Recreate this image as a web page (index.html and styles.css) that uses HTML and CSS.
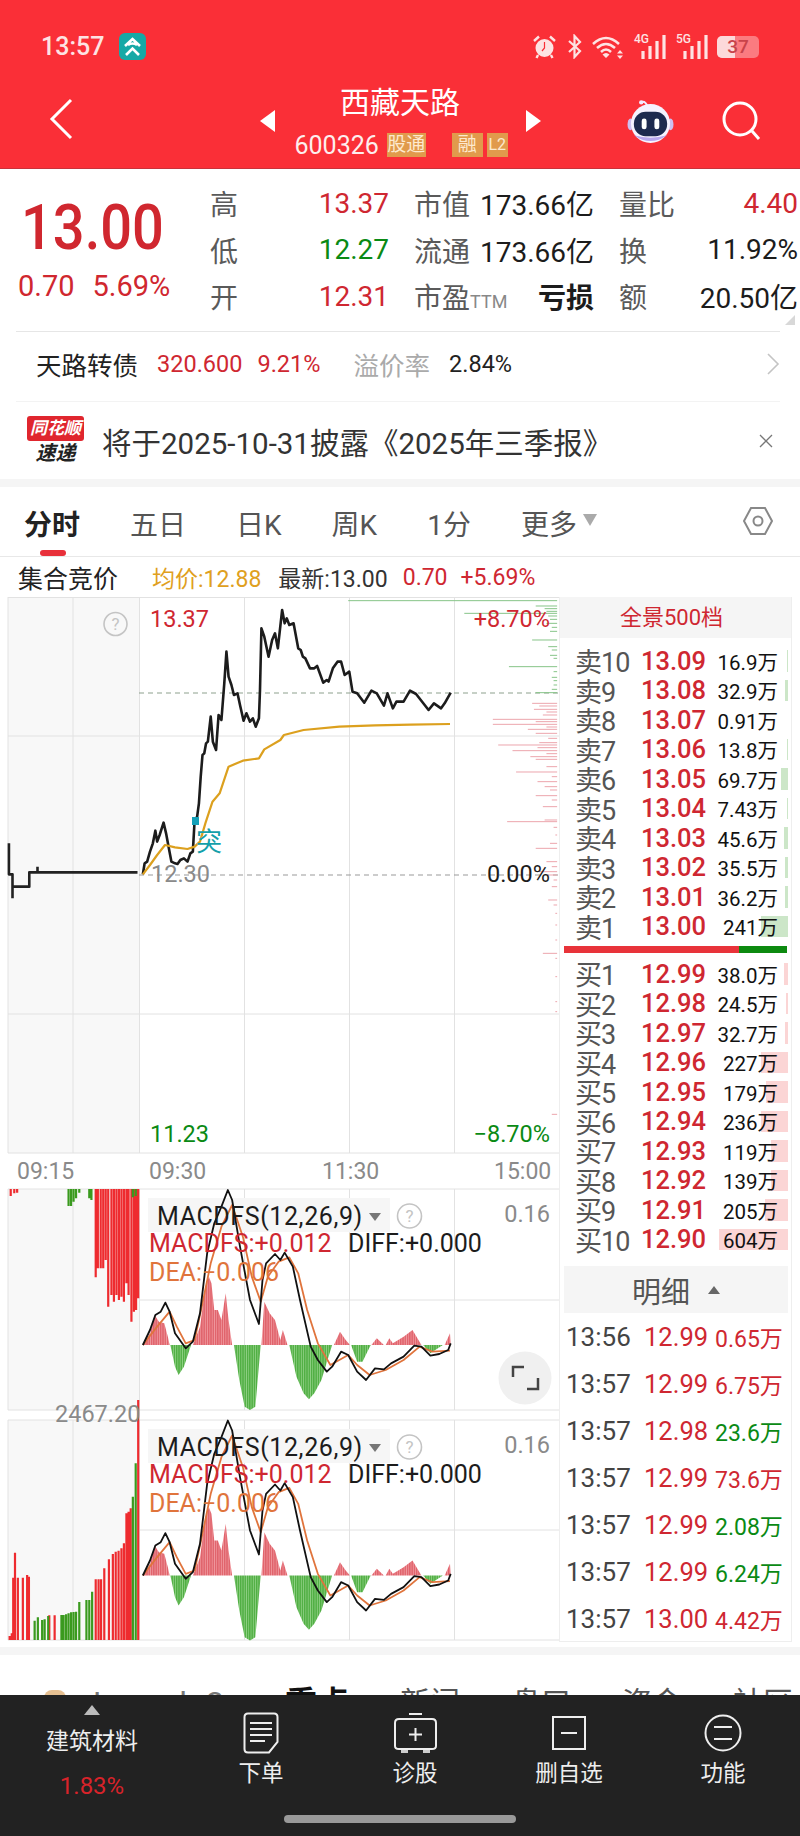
FILE: index.html
```html
<!DOCTYPE html>
<html lang="zh-CN">
<head>
    <meta charset="UTF-8">
    <meta name="viewport" content="width=device-width, initial-scale=1.0">
    <title>西藏天路 600326</title>
    <link rel="stylesheet" href="styles.css">
</head>
<body>
<div class="page">
    <header class="top">
        <div class="status">
            <span class="clock">13:57</span>
            <svg class="app-icon" viewBox="0 0 27 27"><rect width="27" height="27" rx="6" fill="#16a9a6"/><path d="M6 13 L13.5 6 L21 13 M9 12 Q13.5 9 18 12 M7 22 L13.5 15.5 L20 22" fill="none" stroke="#fff" stroke-width="2.6"/></svg>
            <div class="status-right">
                <svg class="alarm" viewBox="0 0 25 25"><circle cx="12.5" cy="14" r="9" fill="#fde3e3"/><path d="M12.5 8 V14 L10 17" fill="none" stroke="#fa2f37" stroke-width="1.2"/><path d="M2 7 L7 2.5 M23 7 L18 2.5 M6 21 L4.5 24 M19 21 L20.500 24" stroke="#fde3e3" stroke-width="2.400" fill="none"/></svg>
                <svg class="bt" viewBox="0 0 15 25"><path d="M2 7 L13 17 L7.500 23 V2 L13 8 L2 18" fill="none" stroke="#fde3e3" stroke-width="2.200"/></svg>
                <svg class="wifi" viewBox="0 0 32 24"><path d="M1 9 Q14 -3 27 9 M5 13 Q14 5 23 13 M9 17 Q14 12 19 17" fill="none" stroke="#fde3e3" stroke-width="2.500"/><path d="M14 23 L10.500 19.500 Q14 16.500 17.500 19.500 Z M28 15 L31 18.500 H25 Z M28 24 L31 20.500 H25 Z" fill="#fde3e3"/></svg>
                <div class="signal"><span class="net">4G</span><svg viewBox="0 0 26 25"><path d="M3 25 V17 M10 25 V12 M17 25 V7 M24 25 V1" stroke="#fde3e3" stroke-width="3.200"/></svg></div>
                <div class="signal"><span class="net">5G</span><svg viewBox="0 0 26 25"><path d="M3 25 V17 M10 25 V12 M17 25 V7 M24 25 V1" stroke="#fde3e3" stroke-width="3.200"/></svg></div>
                <div class="battery"><span class="battery-fill"></span><span class="battery-num">37</span></div>
            </div>
        </div>
        <nav class="stock-nav">
            <svg class="back" viewBox="0 0 24 42"><path d="M22 2 L3 21 L22 40" fill="none" stroke="#fff" stroke-width="3"/></svg>
            <div class="stock-center">
                <span class="tri-left"></span>
                <div class="stock-id">
                    <div class="stock-name">西藏天路</div>
                    <div class="stock-code">
                        <span class="code-num">600326</span>
                        <span class="tag tag-hk">股通</span>
                        <span class="tag tag-rong">融</span>
                        <span class="tag tag-l2">L2</span>
                    </div>
                </div>
                <span class="tri-right"></span>
            </div>
            <div class="nav-right">
                <svg class="robot" viewBox="0 0 48 44"><path d="M21 7 Q19 1 15 2" fill="none" stroke="#f3e9ff" stroke-width="2"/><circle cx="14.500" cy="2.500" r="2.200" fill="#f3e9ff"/><ellipse cx="3.500" cy="25" rx="3" ry="6" fill="#cdbff0"/><ellipse cx="44.500" cy="25" rx="3" ry="6" fill="#cdbff0"/><circle cx="24" cy="24" r="20" fill="#f6f2ff"/><path d="M7 36 Q24 48 41 36 Q24 41 7 36" fill="#b9a8ee"/><rect x="7" y="12" width="34" height="25" rx="12" fill="#1e2a4f"/><rect x="15" y="19" width="5" height="11" rx="2.500" fill="#fff"/><rect x="28" y="19" width="5" height="11" rx="2.500" fill="#fff"/></svg>
                <svg class="search" viewBox="0 0 40 40"><circle cx="18" cy="18" r="16" fill="none" stroke="#fff" stroke-width="3"/><path d="M30 30 L37 38" stroke="#fff" stroke-width="3"/></svg>
            </div>
        </nav>
    </header>

    <section class="quote">
        <div class="price-block">
            <div class="last">13.00</div>
            <div class="change"><span>0.70</span><span>5.69%</span></div>
        </div>
        <div class="stats">
            <span class="lbl">高</span><span class="val red">13.37</span>
            <span class="lbl lbl-mid">市值</span><span class="val dark">173.66亿</span>
            <span class="lbl lbl-mid">量比</span><span class="val red">4.40</span>

            <span class="lbl">低</span><span class="val green">12.27</span>
            <span class="lbl lbl-mid">流通</span><span class="val dark">173.66亿</span>
            <span class="lbl lbl-mid">换</span><span class="val dark">11.92%</span>

            <span class="lbl">开</span><span class="val red">12.31</span>
            <span class="lbl lbl-mid">市盈<small>TTM</small></span><span class="val dark loss">亏损</span>
            <span class="lbl lbl-mid">额</span><span class="val dark">20.50亿</span>
        </div>
        <span class="corner"></span>
    </section>

    <section class="bond">
        <span class="bond-name">天路转债</span>
        <span class="bond-price">320.600</span>
        <span class="bond-pct">9.21%</span>
        <span class="bond-lbl">溢价率</span>
        <span class="bond-prem">2.84%</span>
        <svg class="bond-arrow" viewBox="0 0 14 22"><path d="M2 1 L12 11 L2 21" fill="none" stroke="#c4c4c4" stroke-width="1.600"/></svg>
    </section>

    <section class="notice">
        <div class="ths-logo">
            <span class="ths-top">同花顺</span>
            <span class="ths-bottom">速递</span>
        </div>
        <span class="notice-text">将于2025-10-31披露《2025年三季报》</span>
        <svg class="notice-close" viewBox="0 0 14 14"><path d="M1 1 L13 13 M13 1 L1 13" stroke="#777" stroke-width="1.300"/></svg>
    </section>

    <div class="band"></div>

    <div class="tabs">
        <span class="tab tab-on">分时</span>
        <span class="tab">五日</span>
        <span class="tab">日K</span>
        <span class="tab">周K</span>
        <span class="tab">1分</span>
        <span class="tab tab-more">更多<i class="more-tri"></i></span>
        <svg class="hex" viewBox="0 0 30 30"><path d="M8 2 H22 L29 15 L22 28 H8 L1 15 Z" fill="none" stroke="#888" stroke-width="2"/><circle cx="15" cy="15" r="4.500" fill="none" stroke="#888" stroke-width="2"/></svg>
    </div>

    <div class="infoline">
        <span class="auction">集合竞价</span>
        <span class="avg">均价:12.88</span>
        <span class="latest">最新:13.00</span>
        <span class="chg">0.70</span>
        <span class="chgp">+5.69%</span>
    </div>

    <main class="board">
        <svg class="chart" width="559" height="1044" viewBox="0 597 559 1044">
            <!-- 盘前灰底 -->
            <rect class="pre" x="8" y="597" width="131" height="556"/>
            <rect class="pre" x="8" y="1189" width="131" height="221"/>
            <rect class="pre" x="8" y="1420" width="131" height="220"/>

            <!-- 网格 -->
            <path class="grid" d="M8 597.500 H559 M8 736 H559 M8 1014 H559 M8 1153 H559 M8 597 V1153 M73 597 V1153 M139.500 597 V1153 M244.500 597 V1153 M349.500 597 V1153 M454.500 597 V1153"/>
            <path class="grid" d="M8 1189 H559 M139 1300 H559 M8 1410 H559 M8 1189 V1410 M73 1189 V1410 M139.500 1189 V1410 M244.500 1189 V1410 M349.500 1189 V1410 M454.500 1189 V1410"/>
            <path class="grid" d="M8 1420 H559 M139 1530 H559 M8 1640 H559 M8 1420 V1640 M73 1420 V1640 M139.500 1420 V1640 M244.500 1420 V1640 M349.500 1420 V1640 M454.500 1420 V1640"/>

            <path class="dash-green" d="M139 693 H558"/>
            <path class="dash-gray" d="M139 875 H558"/>

            <!-- 下面的点都按 590 起、x*2.8 y*3 量的 -->
            <g transform="translate(0 590) scale(.35714 .33333)">
                <path class="depth-buy" d="M975 32H1560M1500 48H1560M1525 56H1560M1530 64H1560M1300 70H1560M1535 78H1560M1540 88H1560M1530 100H1560M1545 112H1560M1540 124H1560M1490 150H1560M1535 170H1560M1545 180H1560M1540 196H1560M1550 205H1560M1425 230H1560M1550 245H1560M1545 262H1560M1550 272H1560M1550 285H1560M1545 298H1560M1500 308H1560"/>
                <path class="depth-sell" d="M1490 340H1560M1510 348H1560M1495 358H1560M1530 366H1560M1520 375H1560M1380 388H1560M1500 395H1560M1380 403H1560M1530 411H1560M1478 418H1560M1500 430H1560M1535 445H1560M1510 458H1560M1395 465H1560M1505 473H1560M1435 482H1560M1530 491H1560M1485 500H1560M1500 508H1560M1530 530H1560M1445 546H1560M1545 560H1560M1505 575H1560M1525 590H1560M1540 600H1560M1500 617H1560M1545 630H1560M1520 650H1560M1420 695H1560M1525 690H1560M1550 712H1560M1555 735H1560M1540 760H1560M1500 775H1560M1530 815H1560M1545 830H1560M1510 845H1560M1535 855H1560M1550 870H1560M1545 890H1560M1535 930H1560M1550 945H1560M1555 970H1560M1555 1005H1560M1520 1090H1560M1555 1050H1560M1555 1105H1560M1555 1160H1560M1555 1235H1560M1555 1265H1560M1545 1573H1560"/>
                <path class="line-pre" d="M25 760V853H35V925M35 890H82V847H105V830M105 847H385"/>
                <polyline class="line-price" points="400,853 405,820 412,815 420,785 428,760 435,722 440,755 447,735 458,698 465,730 472,770 480,815 490,820 497,822 505,810 515,805 525,815 533,790 540,785 545,690 552,680 557,640 562,560 567,495 572,490 577,460 582,455 590,380 596,455 605,480 612,375 620,390 628,280 634,185 640,260 648,285 655,315 665,310 672,345 682,392 690,370 700,395 708,385 716,410 725,385 728,300 732,115 740,140 752,200 762,150 770,130 778,175 790,60 797,100 803,85 810,105 822,100 835,175 842,180 848,200 855,205 868,235 880,235 888,228 905,278 915,270 920,275 932,235 945,215 955,215 965,255 978,245 987,305 1000,310 1020,338 1040,302 1055,310 1075,347 1085,310 1100,355 1110,335 1130,335 1148,302 1165,312 1200,360 1215,340 1235,355 1245,340 1262,308"/>
                <polyline class="line-avg" points="400,853 420,825 440,795 462,765 490,772 525,777 545,770 560,755 575,700 595,635 615,610 640,530 680,512 725,505 740,478 785,450 795,435 850,420 950,410 1050,406 1150,404 1260,402"/>
            </g>
            <rect class="signal-dot" x="192" y="817" width="7" height="8"/>
            <text class="tx-signal" x="196" y="851">突</text>

            <circle class="help" cx="115.500" cy="624" r="11.500"/>
            <text class="tx-help" x="115.500" y="630">?</text>

            <text class="tx-axis red" x="150" y="627">13.37</text>
            <text class="tx-axis red" x="550" y="627" text-anchor="end">+8.70%</text>
            <text class="tx-axis mute" x="151" y="882">12.30</text>
            <text class="tx-axis dark" x="550" y="882" text-anchor="end">0.00%</text>
            <text class="tx-axis green" x="150" y="1142">11.23</text>
            <text class="tx-axis green" x="550" y="1142" text-anchor="end">−8.70%</text>

            <text class="tx-time" x="17" y="1179">09:15</text>
            <text class="tx-time" x="149" y="1179">09:30</text>
            <text class="tx-time" x="322" y="1179">11:30</text>
            <text class="tx-time" x="494" y="1179">15:00</text>

            <!-- 成交量 -->
            <g transform="translate(0 1180) scale(.35714 .33333)">
                <path class="vol-red" d="M30 27V48M40 27V40M48 27V38M268 27V292M274 27V265M282 27V265M289 27V265M296 27V240M303 27V380M312 27V345M319 27V365M326 27V345M333 27V360M340 27V350M347 27V365M354 27V310M360 27V345M368 27V425M375 27V395M381 27V390M387 27V355"/>
                <path class="vol-green" d="M192 27V78M199 27V78M206 27V65M213 27V55M222 27V38M250 27V55M256 27V60M372 27V52M380 27V48"/>
            </g>
            <g transform="translate(0 1400) scale(.35714 .33333)">
                <path class="vol-red" d="M27 720V708M33 720V700M37 720V533M42 720V458M50 720V533M64 720V533M76 720V525M81 720V530M138 720V646M153 720V646M268 720V538M276 720V538M283 720V538M292 720V505M305 720V478M316 720V462M324 720V455M332 720V452M340 720V445M347 720V430M354 720V340M360 720V335M366 720V325M387 720V0"/>
                <path class="vol-green" d="M97 720V662M106 720V652M118 720V660M125 720V658M135 720V648M172 720V645M178 720V645M185 720V643M192 720V640M199 720V637M206 720V636M213 720V635M222 720V606M242 720V600M250 720V600M258 720V575M372 720V290M380 720V190"/>
            </g>
            <text class="tx-vol" x="55" y="1422">2467.20</text>

            <!-- MACD -->
            <defs>
                <pattern id="stripe-red" width="6.400" height="12" patternUnits="userSpaceOnUse"><rect width="6.400" height="12" fill="#f0989e"/><rect width="4" height="12" fill="#e0626b"/></pattern>
                <pattern id="stripe-green" width="6.400" height="12" patternUnits="userSpaceOnUse"><rect width="6.400" height="12" fill="#8fd084"/><rect width="4" height="12" fill="#4fae42"/></pattern>
            </defs>
            <rect class="macd-head" x="148" y="1198" width="242" height="34"/>
            <rect class="macd-head" x="148" y="1429" width="242" height="34"/>
            <g id="macd">
                <g transform="translate(0 1180) scale(.35714 .33333)">
                    <path class="hist-red" d="M400 495L420 460 433 405 445 425 460 430 470 470 475 495ZM540 495L560 440 575 320 585 290 592 310 600 390 610 390 620 420 632 340 640 420 650 495ZM732 495L740 365 755 400 770 420 785 480 792 450 805 495ZM935 495L952 455 968 480 980 495ZM1040 495L1055 475 1075 495ZM1080 495L1090 475 1100 490 1130 470 1155 450 1180 495ZM1245 495L1260 460 1262 495Z"/>
                    <path class="hist-green" d="M477 495L490 560 500 585 515 560 535 495ZM655 495L670 600 685 680 700 690 715 680 730 495ZM810 495L830 590 850 640 865 658 880 640 900 600 930 495ZM983 495L1000 545 1015 545 1038 495ZM1185 495L1205 520 1240 495Z"/>
                    <polyline class="line-dea" points="400,495 440,440 475,395 495,440 520,490 545,480 565,380 590,250 620,140 650,75 680,170 705,290 730,365 750,290 780,245 810,232 835,280 860,390 890,490 925,555 975,525 1000,555 1035,585 1080,570 1130,540 1175,500 1210,515 1260,512"/>
                    <polyline class="line-diff" points="400,495 420,450 435,405 450,395 463,368 475,395 490,460 520,505 540,485 560,400 580,220 600,130 620,80 638,30 650,60 672,200 700,360 725,432 735,300 745,250 770,222 785,240 797,218 820,260 840,360 870,500 890,540 915,575 930,560 955,515 975,525 1000,575 1025,600 1050,565 1075,568 1095,550 1130,530 1160,497 1180,500 1205,527 1230,522 1255,510 1262,490"/>
                </g>
            </g>
            <use href="#macd" y="230.500"/>

            <text class="tx-macd tx-title dark" x="157" y="1225">MACDFS(12,26,9)</text>
            <path class="tri-gray" d="M369 1213 H381 L375 1221 Z"/>
            <circle class="help" cx="409.500" cy="1216" r="12"/>
            <text class="tx-help" x="409.500" y="1222">?</text>
            <text class="tx-axis mute" x="550" y="1222" text-anchor="end">0.16</text>
            <text class="tx-macd red" x="149" y="1252">MACDFS:+0.012</text>
            <text class="tx-macd dark" x="348" y="1252">DIFF:+0.000</text>
            <text class="tx-macd orange" x="149" y="1281">DEA:−0.006</text>

            <text class="tx-macd tx-title dark" x="157" y="1456">MACDFS(12,26,9)</text>
            <path class="tri-gray" d="M369 1444 H381 L375 1452 Z"/>
            <circle class="help" cx="409.500" cy="1447" r="12"/>
            <text class="tx-help" x="409.500" y="1453">?</text>
            <text class="tx-axis mute" x="550" y="1453" text-anchor="end">0.16</text>
            <text class="tx-macd red" x="149" y="1483">MACDFS:+0.012</text>
            <text class="tx-macd dark" x="348" y="1483">DIFF:+0.000</text>
            <text class="tx-macd orange" x="149" y="1512">DEA:−0.006</text>

            <circle class="expand-bg" cx="525" cy="1378" r="26.500"/>
            <path class="expand-ico" d="M513 1377 V1367 H524 M538 1378 V1389 H527"/>
        </svg>

        <aside class="book">
            <div class="book-head">全景500档</div>
            <div class="levels levels-sell">
                <div class="level"><span class="bar bar-sell" style="width:1px"></span><span class="lv">卖10</span><span class="lp">13.09</span><span class="lq">16.9万</span></div>
                <div class="level"><span class="bar bar-sell" style="width:3px"></span><span class="lv">卖9</span><span class="lp">13.08</span><span class="lq">32.9万</span></div>
                <div class="level"><span class="lv">卖8</span><span class="lp">13.07</span><span class="lq">0.91万</span></div>
                <div class="level"><span class="bar bar-sell" style="width:1px"></span><span class="lv">卖7</span><span class="lp">13.06</span><span class="lq">13.8万</span></div>
                <div class="level"><span class="bar bar-sell" style="width:7px"></span><span class="lv">卖6</span><span class="lp">13.05</span><span class="lq">69.7万</span></div>
                <div class="level"><span class="bar bar-sell" style="width:1px"></span><span class="lv">卖5</span><span class="lp">13.04</span><span class="lq">7.43万</span></div>
                <div class="level"><span class="bar bar-sell" style="width:4px"></span><span class="lv">卖4</span><span class="lp">13.03</span><span class="lq">45.6万</span></div>
                <div class="level"><span class="bar bar-sell" style="width:3px"></span><span class="lv">卖3</span><span class="lp">13.02</span><span class="lq">35.5万</span></div>
                <div class="level"><span class="bar bar-sell" style="width:3px"></span><span class="lv">卖2</span><span class="lp">13.01</span><span class="lq">36.2万</span></div>
                <div class="level"><span class="bar bar-sell" style="width:27px"></span><span class="lv">卖1</span><span class="lp">13.00</span><span class="lq">241万</span></div>
            </div>
            <div class="split"><span class="split-red"></span><span class="split-green"></span></div>
            <div class="levels levels-buy">
                <div class="level"><span class="bar bar-buy" style="width:4px"></span><span class="lv">买1</span><span class="lp">12.99</span><span class="lq">38.0万</span></div>
                <div class="level"><span class="bar bar-buy" style="width:2px"></span><span class="lv">买2</span><span class="lp">12.98</span><span class="lq">24.5万</span></div>
                <div class="level"><span class="bar bar-buy" style="width:3px"></span><span class="lv">买3</span><span class="lp">12.97</span><span class="lq">32.7万</span></div>
                <div class="level"><span class="bar bar-buy" style="width:27px"></span><span class="lv">买4</span><span class="lp">12.96</span><span class="lq">227万</span></div>
                <div class="level"><span class="bar bar-buy" style="width:22px"></span><span class="lv">买5</span><span class="lp">12.95</span><span class="lq">179万</span></div>
                <div class="level"><span class="bar bar-buy" style="width:27px"></span><span class="lv">买6</span><span class="lp">12.94</span><span class="lq">236万</span></div>
                <div class="level"><span class="bar bar-buy" style="width:17px"></span><span class="lv">买7</span><span class="lp">12.93</span><span class="lq">119万</span></div>
                <div class="level"><span class="bar bar-buy" style="width:17px"></span><span class="lv">买8</span><span class="lp">12.92</span><span class="lq">139万</span></div>
                <div class="level"><span class="bar bar-buy" style="width:23px"></span><span class="lv">买9</span><span class="lp">12.91</span><span class="lq">205万</span></div>
                <div class="level"><span class="bar bar-buy" style="width:69px"></span><span class="lv">买10</span><span class="lp">12.90</span><span class="lq">604万</span></div>
            </div>
            <div class="ticks-head">明细<i class="up-tri"></i></div>
            <div class="ticks">
                <div class="tick"><span class="tt">13:56</span><span class="tp">12.99</span><span class="tq red">0.65万</span></div>
                <div class="tick"><span class="tt">13:57</span><span class="tp">12.99</span><span class="tq red">6.75万</span></div>
                <div class="tick"><span class="tt">13:57</span><span class="tp">12.98</span><span class="tq green">23.6万</span></div>
                <div class="tick"><span class="tt">13:57</span><span class="tp">12.99</span><span class="tq red">73.6万</span></div>
                <div class="tick"><span class="tt">13:57</span><span class="tp">12.99</span><span class="tq green">2.08万</span></div>
                <div class="tick"><span class="tt">13:57</span><span class="tp">12.99</span><span class="tq green">6.24万</span></div>
                <div class="tick"><span class="tt">13:57</span><span class="tp">13.00</span><span class="tq red">4.42万</span></div>
            </div>
        </aside>
    </main>

    <div class="band band-low"></div>

    <div class="news-tabs">
        <span class="lv2-ico"></span>
        <span class="news-lv2">Level-2</span>
        <span class="news-on">重点</span>
        <span>新闻</span>
        <span>盘口</span>
        <span>资金</span>
        <span>社区</span>
    </div>

    <footer class="dock">
        <div class="dock-item dock-sector">
            <i class="sector-tri"></i>
            <span class="sector-name">建筑材料</span>
            <span class="sector-pct">1.83%</span>
        </div>
        <div class="dock-item">
            <svg class="dock-ico" width="36" height="42" viewBox="0 0 36 42"><path d="M5 1.500 H31 Q34.500 1.500 34.500 5 V30 L26 40.500 H5 Q1.500 40.500 1.500 37 V5 Q1.500 1.500 5 1.500 Z" fill="none" stroke="#eee" stroke-width="2"/><path d="M7 11 H29 M7 17 H29 M7 23 H29 M7 29 H22" stroke="#eee" stroke-width="1.800"/></svg>
            <span>下单</span>
        </div>
        <div class="dock-item">
            <svg class="dock-ico" width="43" height="42" viewBox="0 0 43 42"><path d="M15 2 H28 M5 7 H38 Q42 7 42 11 V34 Q42 37 38 37 H5 Q1 37 1 34 V11 Q1 7 5 7 Z" fill="none" stroke="#eee" stroke-width="2"/><path d="M21.500 16 V29 M15 22.500 H28" stroke="#eee" stroke-width="2"/><path d="M7 38 H14 V41 H7 Z M29 38 H36 V41 H29 Z" fill="#ccc"/></svg>
            <span>诊股</span>
        </div>
        <div class="dock-item">
            <svg class="dock-ico" width="34" height="42" viewBox="0 0 34 42"><rect x="1" y="5" width="32" height="32" fill="none" stroke="#eee" stroke-width="2"/><path d="M9 21 H25" stroke="#eee" stroke-width="2"/></svg>
            <span>删自选</span>
        </div>
        <div class="dock-item">
            <svg class="dock-ico" width="38" height="42" viewBox="0 0 38 42"><circle cx="19" cy="21" r="17.500" fill="none" stroke="#eee" stroke-width="2"/><path d="M10 15 H28 M10 27 H28" stroke="#eee" stroke-width="2"/></svg>
            <span>功能</span>
        </div>
        <span class="home-pill"></span>
    </footer>
</div>
</body>
</html>
```

FILE: styles.css
```css
* {
    box-sizing: border-box;
}
body {
    margin: 0;
    background: #fff;
    font-family: Roboto, "Noto Sans CJK SC", sans-serif;
    color: #222;
}
.page {
    position: relative;
    width: 800px;
    height: 1836px;
    overflow: hidden;
}
.red { color: #cf2731; fill: #cf2731; }
.green { color: #0a8a14; fill: #0a8a14; }
.dark { color: #1c1c1c; fill: #1c1c1c; }
.mute { fill: #8a8a8a; }
.orange { fill: #e0743c; }

/* 顶部红色区 */
.top {
    height: 169px;
    background: #fa2f37;
    border-bottom: 1px solid #c9323a;
    color: #fff;
}
.status {
    height: 70px;
    padding: 23px 41px 0 41px;
    display: flex;
    align-items: center;
}
.clock {
    font-size: 25px;
    font-weight: 500;
    color: #fde3e3;
}
.app-icon {
    width: 27px;
    height: 27px;
    margin-left: 15px;
}
.status-right {
    margin-left: auto;
    display: flex;
    align-items: center;
}
.alarm { width: 25px; height: 25px; }
.bt { width: 15px; height: 25px; margin-left: 10px; }
.wifi { width: 32px; height: 24px; margin-left: 10px; }
.signal {
    position: relative;
    width: 32px;
    height: 25px;
    margin-left: 10px;
}
.signal svg {
    position: absolute;
    right: 0;
    top: 0;
    width: 26px;
    height: 25px;
}
.net {
    position: absolute;
    left: 0;
    top: -2px;
    font-size: 12px;
    font-weight: 500;
    color: #fde3e3;
}
.battery {
    position: relative;
    width: 42px;
    height: 22px;
    margin-left: 9px;
    background: #fb7b80;
    border-radius: 5px;
    overflow: hidden;
    text-align: center;
}
.battery-fill {
    position: absolute;
    left: 0;
    top: 0;
    bottom: 0;
    width: 18px;
    background: #fcd9da;
}
.battery-num {
    position: relative;
    font-size: 19px;
    line-height: 22px;
    font-weight: 500;
    color: #c9434a;
}
.stock-nav {
    height: 98px;
    display: grid;
    grid-template-columns: 1fr auto 1fr;
    align-items: center;
}
.back {
    width: 24px;
    height: 42px;
    margin-left: 49px;
}
.stock-center {
    height: 98px;
    display: flex;
    align-items: center;
}
.tri-left, .tri-right {
    width: 0;
    height: 0;
    margin-top: 4px;
    border-top: 11.5px solid transparent;
    border-bottom: 11.5px solid transparent;
}
.tri-left { border-right: 15px solid #fff; }
.tri-right { border-left: 15px solid #fff; }
.stock-id {
    width: 251px;
    align-self: flex-start;
    text-align: center;
}
.stock-name {
    font-size: 30px;
    line-height: 36px;
    margin-top: 15px;
}
.stock-code {
    display: flex;
    align-items: center;
    height: 24px;
    margin: 12px 0 0 20px;
}
.code-num {
    font-size: 25px;
    color: #fdeeee;
}
.tag {
    height: 24px;
    background: #e19a4c;
    color: #fde9cf;
    font-size: 19px;
    line-height: 24px;
    white-space: nowrap;
    text-align: center;
}
.tag-hk {
    width: 39px;
    margin-left: 8px;
}
.tag-rong {
    width: 31px;
    margin-left: 26px;
}
.tag-l2 {
    width: 21px;
    margin-left: 4px;
    font-size: 16px;
}
.nav-right {
    display: flex;
    justify-content: flex-end;
    align-items: center;
    padding: 4px 38px 0 0;
}
.robot { width: 47px; height: 43px; }
.search { width: 40px; height: 40px; margin-left: 48px; }

/* 报价 */
.quote {
    position: relative;
    height: 162px;
    padding-top: 11px;
    display: flex;
}
.price-block {
    width: 210px;
}
.last {
    font-size: 56px;
    font-weight: 500;
    line-height: 66px;
    margin-top: 15px;
    color: #d0272f;
    padding-left: 21px;
    transform: scaleY(1.12);
    transform-origin: left center;
}
.change {
    display: flex;
    gap: 18px;
    padding-left: 18px;
    margin-top: 8px;
    font-size: 29px;
    line-height: 34px;
    color: #d0272f;
}
.stats {
    display: grid;
    grid-template-columns: 50px 129px 85px 120px 85px 119px;
    grid-auto-rows: 46.5px;
    align-items: center;
    white-space: nowrap;
}
.lbl {
    font-size: 28px;
    color: #5a5a5a;
}
.lbl-mid { padding-left: 25px; }
.lbl small {
    font-size: 18px;
    color: #888;
}
.val {
    font-size: 28px;
    text-align: right;
}
.loss { font-weight: 700; }
.corner {
    position: absolute;
    right: 5px;
    bottom: 6px;
    width: 0;
    height: 0;
    border-left: 10px solid transparent;
    border-bottom: 10px solid #d8d8d8;
}

/* 转债 */
.bond {
    height: 71px;
    margin: 0 20px 0 16px;
    padding: 0 0 6px 20px;
    border-top: 1px solid #e6e6e6;
    border-bottom: 1px solid #f3f3f3;
    display: flex;
    align-items: center;
    white-space: nowrap;
}
.bond-name { font-size: 25.5px; color: #222; }
.bond-price { font-size: 23.5px; color: #cf2731; margin-left: 19px; }
.bond-pct { font-size: 23.5px; color: #cf2731; margin-left: 15px; }
.bond-lbl { font-size: 25.5px; color: #aaa; margin-left: 33px; }
.bond-prem { font-size: 23.5px; color: #222; margin-left: 19px; }
.bond-arrow { width: 14px; height: 22px; margin-left: auto; }

/* 公告 */
.notice {
    height: 77px;
    padding: 0 27px;
    display: flex;
    align-items: center;
}
.ths-logo {
    width: 57px;
    display: flex;
    flex-direction: column;
    align-items: center;
}
.ths-top {
    width: 57px;
    height: 25px;
    background: #e0262e;
    border-radius: 3px;
    color: #fff;
    font-size: 17px;
    line-height: 25px;
    font-weight: 700;
    font-style: italic;
    text-align: center;
    white-space: nowrap;
}
.ths-bottom {
    font-size: 20px;
    line-height: 24px;
    font-weight: 700;
    font-style: italic;
    color: #222;
}
.notice-text {
    font-size: 29.5px;
    margin-left: 18px;
    color: #333;
    white-space: nowrap;
}
.notice-close {
    width: 14px;
    height: 14px;
    margin-left: auto;
}
.band {
    height: 8px;
    background: #f5f5f5;
}

/* 周期 */
.tabs {
    height: 70px;
    padding: 0 27px 0 24px;
    border-bottom: 1px solid #e8e8e8;
    display: flex;
    align-items: center;
    gap: 50px;
    font-size: 28px;
    color: #555;
}
.tab {
    position: relative;
    top: 1px;
}
.tab-on {
    font-weight: 700;
    color: #222;
}
.tab-on::after {
    content: "";
    position: absolute;
    left: 16px;
    width: 26px;
    height: 6px;
    bottom: -13px;
    background: #e8303a;
    border-radius: 3px;
}
.tab-more {
    display: flex;
    align-items: center;
}
.more-tri {
    margin: -6px 0 0 6px;
    border-left: 7px solid transparent;
    border-right: 7px solid transparent;
    border-top: 12px solid #aaa;
}
.hex {
    width: 30px;
    height: 30px;
    margin-left: auto;
    margin-top: -2px;
}

/* 行情摘要 */
.infoline {
    height: 40px;
    padding: 0 0 0 18px;
    display: flex;
    align-items: center;
    white-space: nowrap;
}
.auction { font-size: 25px; color: #222; }
.avg { font-size: 23px; color: #e0a01e; margin-left: 34px; }
.latest { font-size: 23px; color: #333; margin-left: 17px; }
.chg { font-size: 23px; color: #cf2731; margin-left: 15px; }
.chgp { font-size: 23px; color: #cf2731; margin-left: 13px; }

/* 分时图 */
.board {
    display: flex;
    height: 1045px;
}
.chart {
    flex: none;
    display: block;
}
.pre { fill: #f8f8f8; }
.grid {
    fill: none;
    stroke: #e2e2e2;
    stroke-width: 1;
}
.dash-green {
    stroke: #8da08d;
    stroke-width: 1;
    stroke-dasharray: 5 4;
}
.dash-gray {
    stroke: #999;
    stroke-width: 1;
    stroke-dasharray: 5 4;
}
.depth-buy, .depth-sell, .line-pre, .line-price, .line-avg, .line-diff, .line-dea,
.vol-red, .vol-green {
    fill: none;
    vector-effect: non-scaling-stroke;
}
.depth-buy { stroke: #86c488; stroke-width: 1; }
.depth-sell { stroke: #eca5ad; stroke-width: 1; }
.line-pre { stroke: #222; stroke-width: 2.6; stroke-linejoin: round; }
.line-price { stroke: #1c1c1c; stroke-width: 2.6; stroke-linejoin: round; }
.line-avg { stroke: #dca01e; stroke-width: 2.2; stroke-linejoin: round; }
.line-diff { stroke: #111; stroke-width: 1.8; stroke-linejoin: round; }
.line-dea { stroke: #e0743c; stroke-width: 1.8; stroke-linejoin: round; }
.vol-red { stroke: #ee2b2f; stroke-width: 2.2; }
.vol-green { stroke: #3a9a1e; stroke-width: 2.2; }
.hist-red { fill: url(#stripe-red); }
.hist-green { fill: url(#stripe-green); }
.signal-dot { fill: #14a0b8; }
.tx-signal {
    font-size: 26px;
    fill: #14a0aa;
}
.help {
    fill: none;
    stroke: #c4c4c4;
    stroke-width: 1.6;
}
.tx-help {
    font-size: 17px;
    fill: #c4c4c4;
    text-anchor: middle;
}
.tx-axis { font-size: 23.5px; }
.tx-time {
    font-size: 23px;
    fill: #8a8a8a;
}
.tx-vol {
    font-size: 23.5px;
    fill: #8a8a8a;
}
.tx-macd { font-size: 25px; }
.tx-title { letter-spacing: .6px; }
.macd-head { fill: #f6f6f6; }
.tri-gray { fill: #777; }
.expand-bg { fill: #f0f0f0; }
.expand-ico {
    fill: none;
    stroke: #444;
    stroke-width: 2.5;
}

/* 盘口 */
.book {
    width: 233px;
    height: 1045px;
    border-left: 1px solid #eee;
    border-right: 1px solid #eee;
    border-bottom: 1px solid #eee;
}
.book-head {
    height: 41px;
    padding-right: 8px;
    background: #f5f5f5;
    color: #cf2731;
    font-size: 22px;
    line-height: 41px;
    text-align: center;
}
.levels-sell {
    padding-top: 8px;
}
.levels-buy {
    padding-top: 6px;
}
.level {
    position: relative;
    height: 29.5px;
    display: flex;
    align-items: center;
    white-space: nowrap;
}
.bar {
    position: absolute;
    right: 3px;
    top: 4px;
    bottom: 4px;
}
.bar-sell { background: #cce6c8; }
.bar-buy { background: #fbd5d5; }
.lv {
    position: relative;
    width: 66px;
    margin-left: 15px;
    font-size: 27px;
    letter-spacing: -1px;
    color: #555;
}
.lp {
    position: relative;
    width: 65px;
    font-size: 25.5px;
    font-weight: 500;
    color: #cf2731;
}
.lq {
    position: relative;
    width: 72px;
    font-size: 20.5px;
    text-align: right;
    color: #111;
}
.split {
    display: flex;
    height: 7px;
    margin: 5px 3px 0 4px;
}
.split-red { width: 175px; background: #e8333a; }
.split-green { width: 48px; background: #0d8a10; }
.ticks-head {
    height: 47px;
    margin: 12px 3px 0 4px;
    background: #f5f5f5;
    display: flex;
    align-items: center;
    justify-content: center;
    gap: 18px;
    font-size: 29px;
    color: #555;
}
.up-tri {
    border-left: 6px solid transparent;
    border-right: 6px solid transparent;
    border-bottom: 8px solid #666;
}
.tick {
    height: 47px;
    padding-left: 6px;
    display: flex;
    align-items: center;
    white-space: nowrap;
}
.tt {
    width: 78px;
    font-size: 26px;
    color: #444;
}
.tp {
    width: 71px;
    font-size: 25.5px;
    color: #cf2731;
}
.tq {
    font-size: 23px;
}

/* 底部 */
.band-low {
    margin-top: 5px;
}
.news-tabs {
    padding: 28px 0 0 93px;
    display: flex;
    align-items: flex-start;
    gap: 51px;
    font-size: 30px;
    line-height: 40px;
    color: #555;
    white-space: nowrap;
}
.lv2-ico {
    position: absolute;
    left: 44px;
    top: 1690px;
    width: 22px;
    height: 22px;
    border-radius: 8px 8px 0 0;
    background: #e6c092;
}
.news-lv2 {
    width: 141px;
    font-size: 32px;
    letter-spacing: 5px;
    color: #777;
}
.news-on {
    font-weight: 700;
    font-size: 32px;
    color: #111;
}
.dock {
    position: absolute;
    left: 0;
    right: 0;
    bottom: 0;
    height: 141px;
    background: #222;
    display: grid;
    grid-template-columns: 184px repeat(4, 154px);
    color: #eee;
    font-size: 22.5px;
}
.dock-item {
    display: flex;
    flex-direction: column;
    align-items: center;
    padding-top: 17px;
}
.dock-ico {
    display: block;
}
.dock-item span {
    margin-top: 1px;
    line-height: 36px;
}
.dock-sector {
    padding-top: 10px;
}
.sector-tri {
    border-left: 8px solid transparent;
    border-right: 8px solid transparent;
    border-bottom: 10px solid #bbb;
}
.dock-sector .sector-name {
    margin-top: 9px;
    font-size: 23px;
}
.dock-sector .sector-pct {
    margin-top: 8px;
    color: #d8232a;
    font-size: 24px;
}
.home-pill {
    position: absolute;
    left: 284px;
    bottom: 13px;
    width: 232px;
    height: 8px;
    background: #999;
    border-radius: 4px;
}
```
